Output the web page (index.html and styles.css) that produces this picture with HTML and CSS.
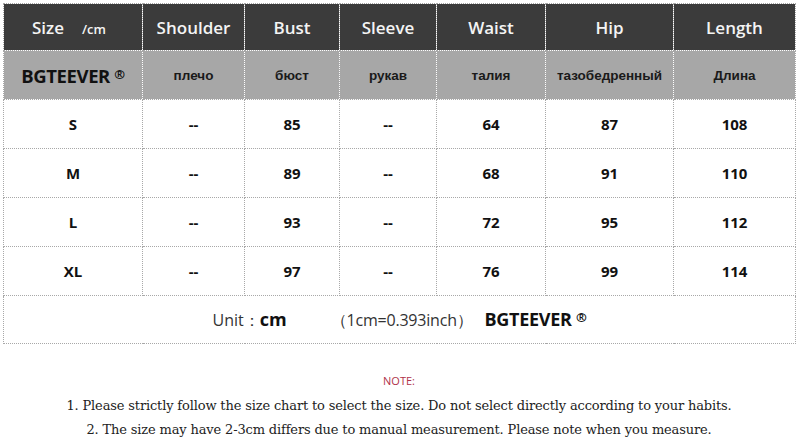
FILE: index.html
```html
<!DOCTYPE html>
<html>
<head>
<meta charset="utf-8">
<link rel="stylesheet" href="styles.css">
</head>
<body>
<table class="chart">
  <colgroup>
    <col class="c1"><col class="c2"><col class="c3"><col class="c4"><col class="c5"><col class="c6"><col class="c7">
  </colgroup>
  <tr class="head">
    <td><span class="size">Size</span><span class="unit">/cm</span></td>
    <td>Shoulder</td><td>Bust</td><td>Sleeve</td><td>Waist</td><td>Hip</td><td>Length</td>
  </tr>
  <tr class="sub">
    <td class="brand">BGTEEVER <span class="reg">®</span></td>
    <td>плечо</td><td>бюст</td><td>рукав</td><td>талия</td><td>тазобедренный</td><td>Длина</td>
  </tr>
  <tr class="row"><td>S</td><td>--</td><td>85</td><td>--</td><td>64</td><td>87</td><td>108</td></tr>
  <tr class="row"><td>M</td><td>--</td><td>89</td><td>--</td><td>68</td><td>91</td><td>110</td></tr>
  <tr class="row"><td>L</td><td>--</td><td>93</td><td>--</td><td>72</td><td>95</td><td>112</td></tr>
  <tr class="row"><td>XL</td><td>--</td><td>97</td><td>--</td><td>76</td><td>99</td><td>114</td></tr>
  <tr class="foot">
    <td colspan="7"><span class="u-label">Unit：</span><span class="u-cm">cm</span><span class="u-conv">（1cm=0.393inch）</span><span class="u-brand">BGTEEVER <span class="reg">®</span></span></td>
  </tr>
</table>
<div class="notes">
  <p class="note-title">NOTE:</p>
  <p class="note-line">1. Please strictly follow the size chart to select the size. Do not select directly according to your habits.</p>
  <p class="note-line">2. The size may have 2-3cm differs due to manual measurement. Please note when you measure.</p>
</div>
</body>
</html>
```
FILE: styles.css
```css
html, body {
  margin: 0;
  padding: 0;
  background: #ffffff;
}
body {
  padding: 3px 0 0 3px;
  width: 800px;
  height: 442px;
  box-sizing: border-box;
  overflow: hidden;
}
.chart {
  border-collapse: collapse;
  table-layout: fixed;
  width: 792px;
  font-family: "Open Sans", "DejaVu Sans", sans-serif;
  color: #111;
}
.c1 { width: 139px; }
.c2 { width: 102px; }
.c3 { width: 95px; }
.c4 { width: 97px; }
.c5 { width: 109px; }
.c6 { width: 128px; }
.c7 { width: 122px; }
.chart td {
  border: 1px dotted #a8a8a8;
  text-align: center;
  padding: 0;
  overflow: hidden;
  white-space: nowrap;
}
.head td {
  background: #3b3b3b;
  color: #f4f4f4;
  height: 46px;
  font-size: 17px;
  font-weight: 600;
}
.head .size {
  margin-left: -8px;
}
.head .unit {
  font-size: 13px;
  margin-left: 18px;
}
.sub td {
  background: #a7a7a7;
  height: 48px;
  font-family: "Liberation Sans", Arial, sans-serif;
  font-weight: 700;
  font-size: 13.5px;
  color: #1a1a1a;
}
.sub td.brand {
  font-family: "Open Sans", sans-serif;
  font-size: 18.5px;
  font-weight: 700;
  color: #111;
  letter-spacing: -0.4px;
}
.reg {
  font-size: 13px;
  vertical-align: 4px;
}
.row td {
  height: 48px;
  font-size: 15px;
  font-weight: 700;
  color: #111;
}
.foot td {
  height: 47px;
  font-size: 16px;
  color: #333;
}
.u-label {
  font-size: 16px;
  color: #333;
}
.u-cm {
  font-size: 18px;
  font-weight: 700;
  color: #111;
}
.u-conv {
  margin-left: 44px;
  font-size: 16px;
  color: #333;
  letter-spacing: -0.2px;
}
.u-brand {
  margin-left: 12px;
  font-size: 18px;
  font-weight: 700;
  color: #111;
  letter-spacing: -0.3px;
}
.notes {
  width: 792px;
  text-align: center;
  padding-top: 29px;
}
.notes p {
  margin: 0;
}
.note-title {
  font-family: "Open Sans", sans-serif;
  font-size: 11px;
  color: #b0324a;
  line-height: 16px;
  margin-bottom: 5px !important;
}
.note-line {
  font-family: "DejaVu Serif", "Liberation Serif", serif;
  font-size: 13px;
  color: #222;
  line-height: 23.5px;
  letter-spacing: -0.15px;
}
```
